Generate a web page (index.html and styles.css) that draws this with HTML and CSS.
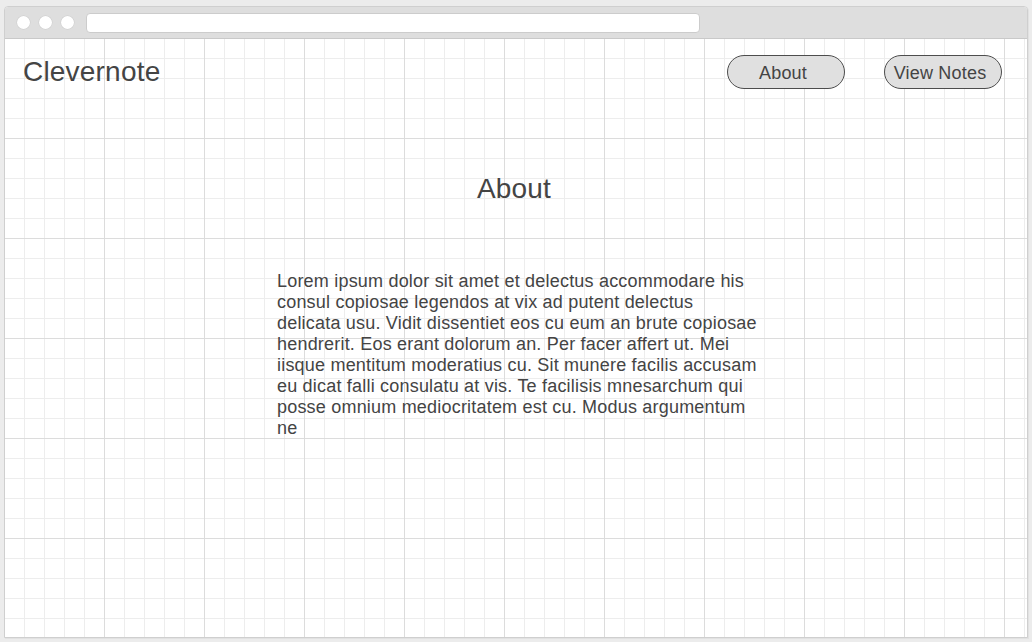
FILE: index.html
```html
<!DOCTYPE html>
<html lang="en">
<head>
<meta charset="utf-8">
<title>Clevernote</title>
<link rel="stylesheet" href="styles.css">
</head>
<body>
<div class="window">
  <div class="chrome">
    <span class="dot"></span>
    <span class="dot"></span>
    <span class="dot"></span>
    <span class="address"></span>
  </div>
  <div class="page">
    <header class="header">
      <div class="brand">Clevernote</div>
      <nav class="nav">
        <button class="btn">About</button>
        <button class="btn">View Notes</button>
      </nav>
    </header>
    <main class="main">
      <h1 class="title">About</h1>
      <p class="text">Lorem ipsum dolor sit amet et delectus accommodare his consul copiosae legendos at vix ad putent delectus delicata usu. Vidit dissentiet eos cu eum an brute copiosae hendrerit. Eos erant dolorum an. Per facer affert ut. Mei iisque mentitum moderatius cu. Sit munere facilis accusam eu dicat falli consulatu at vis. Te facilisis mnesarchum qui posse omnium mediocritatem est cu. Modus argumentum ne</p>
    </main>
  </div>
</div>
</body>
</html>
```

FILE: styles.css
```css
html, body {
  margin: 0;
  padding: 0;
}
body {
  background: #ececec;
  padding: 6px 4px 4px 4px;
  font-family: "Liberation Sans", Arial, sans-serif;
  color: #444444;
  letter-spacing: 0.2px;
}
.window {
  width: 1024px;
  height: 632px;
  box-sizing: border-box;
  border: 1px solid #cfcfcf;
  border-radius: 4px 4px 0 0;
  background: #ffffff;
  display: flex;
  flex-direction: column;
  overflow: hidden;
  box-shadow: 1px 1px 0 #e2e2e2;
}
.chrome {
  height: 31px;
  flex: none;
  background: #dedede;
  border-bottom: 1px solid #c9c9c9;
  display: flex;
  align-items: center;
  padding-left: 12px;
  gap: 9px;
}
.dot {
  width: 13px;
  height: 13px;
  border-radius: 50%;
  background: #ffffff;
  box-shadow: 0 0 0 0.5px #cccccc;
}
.address {
  margin-left: 3px;
  width: 612px;
  height: 18px;
  background: #ffffff;
  border: 1px solid #cccccc;
  border-radius: 4px;
}
.page {
  flex: 1;
  background-color: #ffffff;
  background-image:
    linear-gradient(to right, #dcdcdc 1px, transparent 1px),
    linear-gradient(to bottom, #dcdcdc 1px, transparent 1px),
    linear-gradient(to right, #ededed 1px, transparent 1px),
    linear-gradient(to bottom, #ededed 1px, transparent 1px);
  background-size: 100px 100px, 100px 100px, 20px 20px, 20px 20px;
  background-position: 99px 99px, 99px 99px, 19px 19px, 19px 19px;
}
.header {
  display: flex;
  align-items: center;
  justify-content: space-between;
  padding: 16px 25px 0 18px;
}
.brand {
  font-size: 28px;
  line-height: 34px;
}
.nav {
  display: flex;
  gap: 39px;
}
.btn {
  width: 118px;
  height: 34px;
  box-sizing: border-box;
  border: 1px solid #4d4d4d;
  border-radius: 17px;
  background: #e0e0e0;
  font-family: "Liberation Sans", Arial, sans-serif;
  font-size: 18px;
  letter-spacing: 0.2px;
  color: #444444;
  padding: 2px 6px 0 0;
  text-align: center;
}
.main {
  display: flex;
  flex-direction: column;
  align-items: center;
}
.title {
  margin: 83px 4px 0 0;
  font-size: 28px;
  line-height: 34px;
  font-weight: normal;
}
.text {
  margin: 65px 0 0 3px;
  width: 481px;
  font-size: 18px;
  line-height: 21px;
  padding: 0;
}
```
